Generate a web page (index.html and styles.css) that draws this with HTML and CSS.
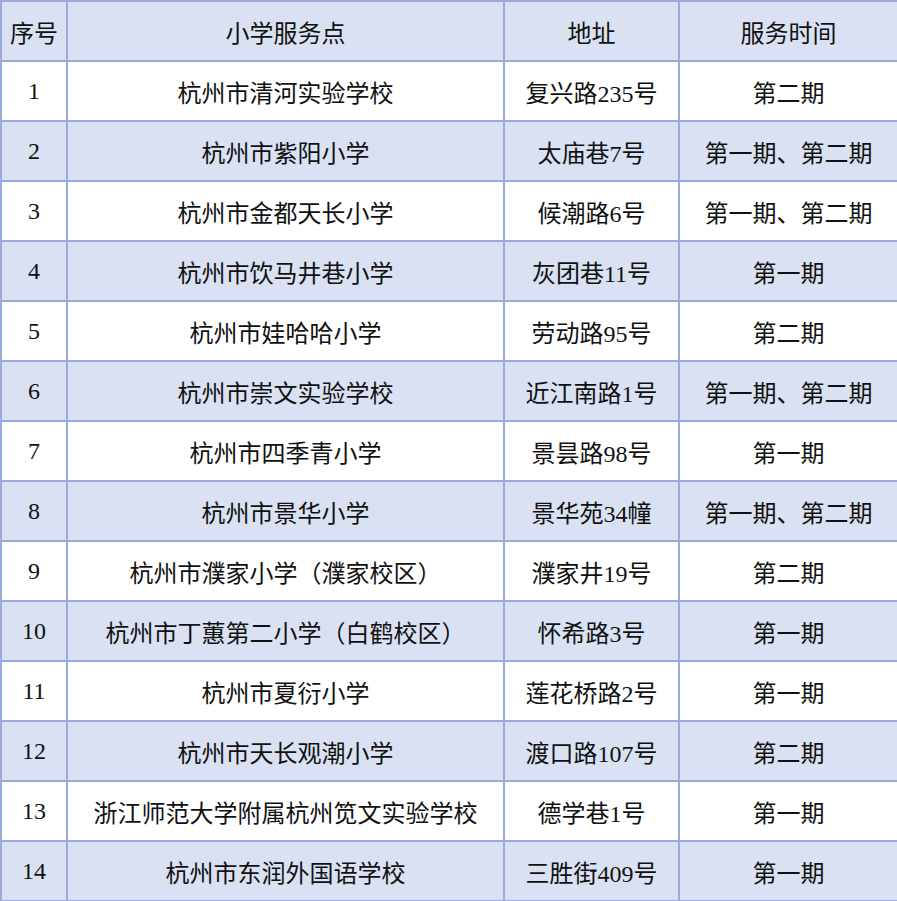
FILE: index.html
```html
<!DOCTYPE html>
<html lang="zh-CN">
<head>
<meta charset="utf-8">
<link rel="stylesheet" href="styles.css">
</head>
<body>
<table class="sched">
<colgroup><col class="c1"><col class="c2"><col class="c3"><col class="c4"></colgroup>
<thead>
<tr class="alt"><th>序号</th><th>小学服务点</th><th>地址</th><th>服务时间</th></tr>
</thead>
<tbody>
<tr><td>1</td><td>杭州市清河实验学校</td><td>复兴路235号</td><td>第二期</td></tr>
<tr class="alt"><td>2</td><td>杭州市紫阳小学</td><td>太庙巷7号</td><td>第一期、第二期</td></tr>
<tr><td>3</td><td>杭州市金都天长小学</td><td>候潮路6号</td><td>第一期、第二期</td></tr>
<tr class="alt"><td>4</td><td>杭州市饮马井巷小学</td><td>灰团巷11号</td><td>第一期</td></tr>
<tr><td>5</td><td>杭州市娃哈哈小学</td><td>劳动路95号</td><td>第二期</td></tr>
<tr class="alt"><td>6</td><td>杭州市崇文实验学校</td><td>近江南路1号</td><td>第一期、第二期</td></tr>
<tr><td>7</td><td>杭州市四季青小学</td><td>景昙路98号</td><td>第一期</td></tr>
<tr class="alt"><td>8</td><td>杭州市景华小学</td><td>景华苑34幢</td><td>第一期、第二期</td></tr>
<tr><td>9</td><td>杭州市濮家小学（濮家校区）</td><td>濮家井19号</td><td>第二期</td></tr>
<tr class="alt"><td>10</td><td>杭州市丁蕙第二小学（白鹤校区）</td><td>怀希路3号</td><td>第一期</td></tr>
<tr><td>11</td><td>杭州市夏衍小学</td><td>莲花桥路2号</td><td>第一期</td></tr>
<tr class="alt"><td>12</td><td>杭州市天长观潮小学</td><td>渡口路107号</td><td>第二期</td></tr>
<tr><td>13</td><td>浙江师范大学附属杭州笕文实验学校</td><td>德学巷1号</td><td>第一期</td></tr>
<tr class="alt"><td>14</td><td>杭州市东润外国语学校</td><td>三胜街409号</td><td>第一期</td></tr>
</tbody>
</table>
</body>
</html>
```

FILE: styles.css
```css
html, body {
  margin: 0;
  padding: 0;
  background: #ffffff;
}
.sched {
  border-collapse: collapse;
  table-layout: fixed;
  width: 897px;
  font-family: "Liberation Serif", "Noto Sans CJK SC", serif;
  font-size: 24px;
  color: #111111;
}
.c1 { width: 66px; }
.c2 { width: 437px; }
.c3 { width: 175px; }
.c4 { width: 219px; }
.sched th, .sched td {
  border: 2px solid #9aa9e0;
  height: 58px;
  padding: 0;
  text-align: center;
  vertical-align: middle;
  font-weight: normal;
  white-space: nowrap;
}
.sched thead th { height: 58px; }
.alt { background: #d9e1f2; }
```
